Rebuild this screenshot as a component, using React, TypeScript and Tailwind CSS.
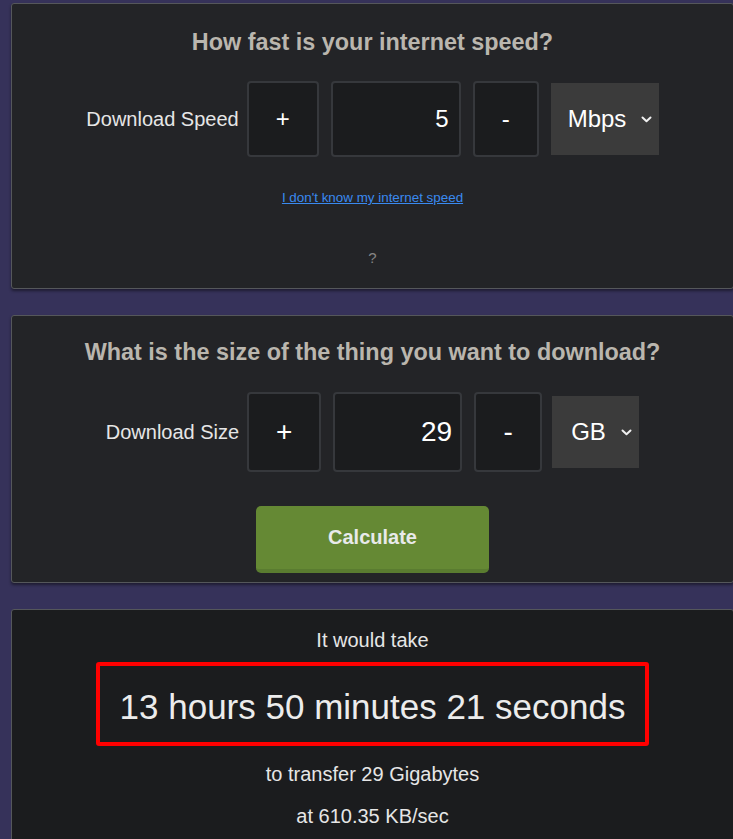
import React from "react";

function Chevron() {
  return (
    <svg width="11" height="7" viewBox="0 0 11 7" fill="none">
      <path d="M1.5 1.5 L5.5 5.2 L9.5 1.5" stroke="#f0f0f0" strokeWidth="2" strokeLinecap="round" strokeLinejoin="round" />
    </svg>
  );
}

function Row({
  label,
  value,
  unit,
  big,
}: {
  label: string;
  value: string;
  unit: string;
  big?: boolean;
}) {
  const boxH = big ? "h-[80px]" : "h-[76px]";
  const txt = big ? "text-[28px]" : "text-[24px]";
  return (
    <div className="flex items-center justify-center">
      <div className="text-[20px] text-[#e6e6e6] mr-[8px] leading-none">{label}</div>
      <div
        className={`${boxH} ${big ? "w-[74px]" : "w-[72px]"} ${txt} flex items-center justify-center rounded-[4px] border-2 border-[#36383c] bg-[#1b1c1e] text-white`}
      >
        +
      </div>
      <div
        className={`${boxH} ${big ? "w-[129px] pr-[8px]" : "w-[130px] pr-[10px]"} ${txt} ml-[12px] flex items-center justify-end rounded-[4px] border-2 border-[#36383c] bg-[#1b1c1e] text-white`}
      >
        {value}
      </div>
      <div
        className={`${boxH} ${big ? "w-[68px]" : "w-[66px]"} ${txt} ml-[12px] flex items-center justify-center rounded-[4px] border-2 border-[#36383c] bg-[#1b1c1e] text-white`}
      >
        -
      </div>
      <div
        className={`h-[72px] ${big ? "w-[87px] ml-[10px] pl-[19px]" : "w-[108px] ml-[12px] pl-[17px]"} flex items-center justify-between pr-[7px] bg-[#3b3b3b] text-[24px] text-white`}
      >
        <span>{unit}</span>
        <Chevron />
      </div>
    </div>
  );
}

export default function App() {
  return (
    <div className="min-h-screen w-full overflow-hidden bg-[#36325a] pt-[3px] font-['Liberation_Sans',Arial,sans-serif]">
      {/* Card 1 */}
      <div className="ml-[11px] w-[723px] h-[286px] rounded-[3px] border border-[#55575b] bg-[#232427] shadow-[0_2px_3px_rgba(0,0,0,0.45)] flex flex-col items-center pt-[26px]">
        <div className="text-[23.4px] leading-[24px] font-bold text-[#bab6ae]">How fast is your internet speed?</div>
        <div className="mt-[27px]">
          <Row label="Download Speed" value="5" unit="Mbps" />
        </div>
        <a
          href="#"
          className="mt-[33px] text-[13.4px] leading-[16px] text-[#3a8af0] underline"
        >
          I don't know my internet speed
        </a>
        <div className="mt-[44px] text-[15px] leading-[16px] text-[#858585]">?</div>
      </div>

      {/* Card 2 */}
      <div className="mt-[26px] ml-[11px] w-[723px] h-[268px] rounded-[3px] border border-[#55575b] bg-[#232427] shadow-[0_2px_3px_rgba(0,0,0,0.45)] flex flex-col items-center pt-[24px]">
        <div className="text-[23.4px] leading-[24px] font-bold text-[#bab6ae]">
          What is the size of the thing you want to download?
        </div>
        <div className="mt-[28px]">
          <Row label="Download Size" value="29" unit="GB" big />
        </div>
        <button className="mt-[34px] w-[233px] h-[67px] rounded-[5px] bg-[#658934] border-b-[4px] border-[#5a7c30] text-[20px] font-bold text-[#e8eaea] flex items-center justify-center pb-[2px]">
          Calculate
        </button>
      </div>

      {/* Card 3 */}
      <div className="mt-[26px] ml-[11px] w-[723px] h-[260px] rounded-[3px] border border-[#55575b] bg-[#1b1c1e] flex flex-col items-center pt-[18px]">
        <div className="text-[20px] leading-[24px] text-[#e6e6e6]">It would take</div>
        <div className="mt-[10px] w-[553px] h-[84px] rounded-[3px] border-[4px] border-[#ff0000] flex items-center justify-center pt-[7px] text-[35px] text-[#ececec]">
          13 hours 50 minutes 21 seconds
        </div>
        <div className="mt-[16px] text-[20px] leading-[24px] text-[#e6e6e6]">to transfer 29 Gigabytes</div>
        <div className="mt-[18px] text-[20px] leading-[24px] text-[#e6e6e6]">at 610.35 KB/sec</div>
      </div>
    </div>
  );
}
